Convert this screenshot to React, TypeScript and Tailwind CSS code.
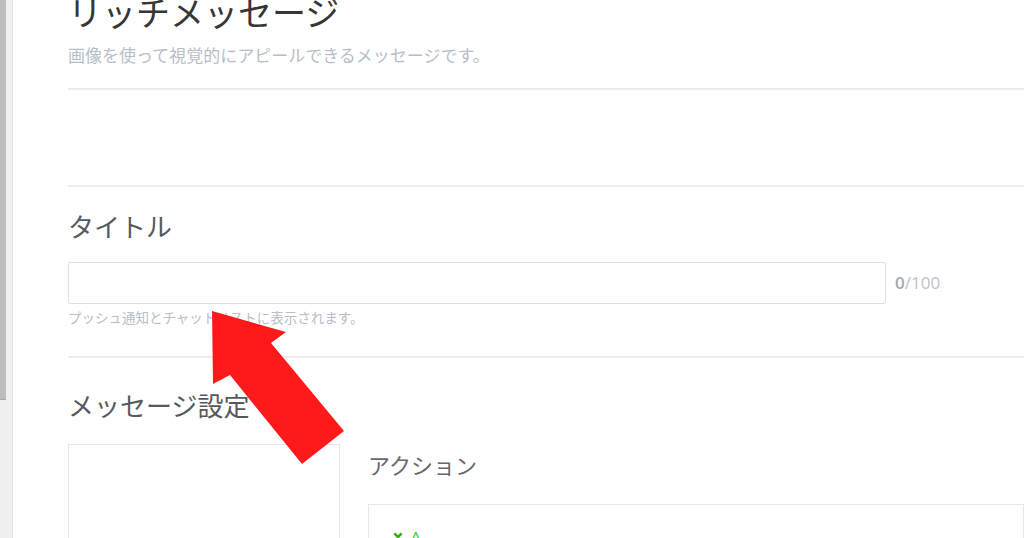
import React from "react";

const jp = { fontFamily: '"Noto Sans CJK JP", "Noto Sans", sans-serif' };

// red annotation arrow pointing at the helper text
function Arrow() {
  return (
    <svg
      className="absolute left-0 top-0 pointer-events-none"
      width={1024}
      height={538}
      viewBox="0 0 1024 538"
    >
      <polygon
        points="212,311 286,332 271,343 344,431 302,464 230,375 213,384"
        fill="#fe1a1a"
      />
    </svg>
  );
}

function Scrollbar() {
  return (
    <div className="flex h-full shrink-0">
      <div className="w-[12px] h-full bg-[#f0f0f0]">
        <div className="w-[6px] h-[400px] bg-[#bdbdbd] border-b border-[#a8a8a8]" />
      </div>
      <div className="w-[1px] h-full bg-[#e1e7ef]" />
    </div>
  );
}

export default function App() {
  return (
    <div
      className="relative w-[1024px] h-[538px] overflow-hidden bg-white flex"
      style={jp}
    >
      <Scrollbar />

      <div className="flex-1 pl-[55px] flex flex-col [&>*]:shrink-0">
        {/* Header */}
        <h1 className="mt-[-8px] text-[34px] leading-[40px] text-[#363636] font-normal whitespace-nowrap">
          リッチメッセージ
        </h1>
        <p className="mt-[11px] text-[17px] leading-[24px] text-[#b8bec8] whitespace-nowrap">
          画像を使って視覚的にアピールできるメッセージです。
        </p>
        <div className="mt-[21px] h-[2px] bg-[#ededed]" />

        <div className="mt-[95px] h-[2px] bg-[#ededed]" />

        {/* Title */}
        <h2 className="mt-[21px] text-[26px] leading-[36px] text-[#555a5f] font-normal">
          タイトル
        </h2>
        <div className="mt-[18px] flex items-center">
          <div className="w-[818px] h-[42px] border border-[#dde1e7] rounded-[2px] bg-white" />
          <div
            className="ml-[9px] text-[17px] text-[#bcc2ca]"
            style={{ fontFamily: '"Open Sans", "Noto Sans", sans-serif' }}
          >
            <span className="font-semibold text-[#a2aab4]">0</span>/100
          </div>
        </div>
        <p className="mt-[4px] text-[13.5px] leading-[18px] text-[#b8bec8] whitespace-nowrap">
          プッシュ通知とチャットリストに表示されます。
        </p>
        <div className="mt-[30px] h-[2px] bg-[#ededed]" />

        {/* Message settings */}
        <h2 className="mt-[29px] text-[26px] leading-[36px] text-[#555a5f] font-normal">
          メッセージ設定
        </h2>
        <div className="mt-[21px] flex gap-[28px]">
          <div className="w-[272px] h-[200px] border border-[#e3e8ef] shrink-0" />
          <div className="flex-1 flex flex-col pt-[5px]">
            <h3 className="text-[22px] leading-[30px] text-[#666a6e] font-normal">
              アクション
            </h3>
            <div className="mt-[25px] h-[120px] border border-[#e8e8e8] pl-[24px] pt-[22px] flex items-start gap-[8px]">
              <svg width="10" height="7" viewBox="0 0 10 7" className="mt-[5px]">
                <path d="M1.3 1.3 L5 5 L8.7 1.3" stroke="#2fb50a" strokeWidth="2.6" fill="none" />
              </svg>
              <span
                className="text-[15px] leading-[18px] text-[#3cc21a]"
                style={{ fontFamily: '"Open Sans", sans-serif' }}
              >
                A
              </span>
            </div>
          </div>
        </div>
      </div>

      <Arrow />
    </div>
  );
}
